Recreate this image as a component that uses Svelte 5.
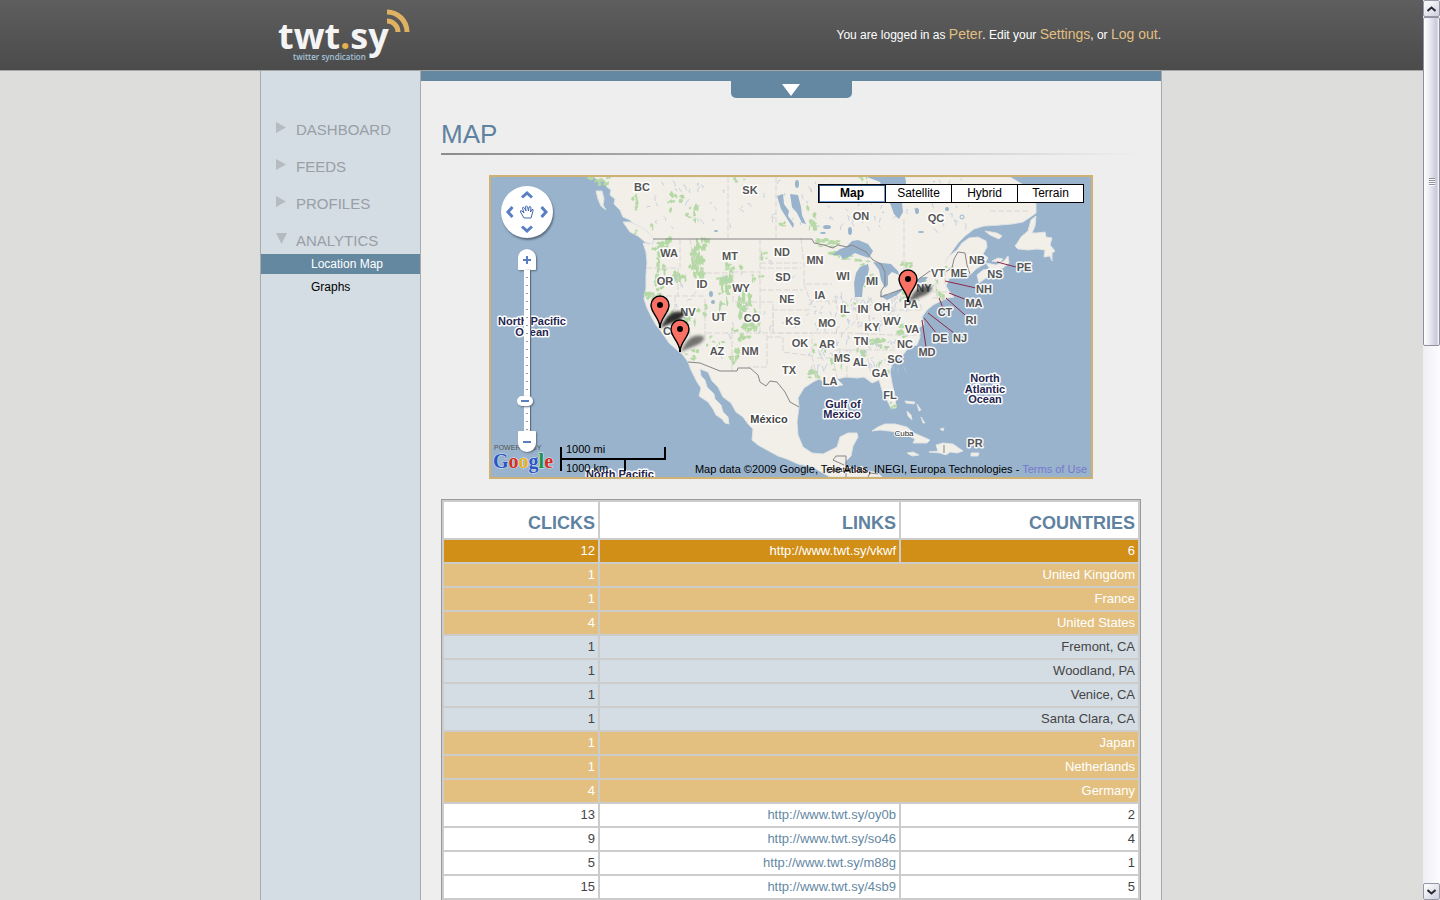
<script>
  const nav = ['Dashboard', 'Feeds', 'Profiles'];
  const mapTypes = ['Map', 'Satellite', 'Hybrid', 'Terrain'];
  let mapType = $state('Map');
  let zoom = $state(3);

  const rows = [
    { kind: 'selected', clicks: 12, link: 'http://www.twt.sy/vkwf', countries: 6 },
    { kind: 'nation', clicks: 1, place: 'United Kingdom' },
    { kind: 'nation', clicks: 1, place: 'France' },
    { kind: 'nation', clicks: 4, place: 'United States' },
    { kind: 'city', clicks: 1, place: 'Fremont, CA' },
    { kind: 'city', clicks: 1, place: 'Woodland, PA' },
    { kind: 'city', clicks: 1, place: 'Venice, CA' },
    { kind: 'city', clicks: 1, place: 'Santa Clara, CA' },
    { kind: 'nation', clicks: 1, place: 'Japan' },
    { kind: 'nation', clicks: 1, place: 'Netherlands' },
    { kind: 'nation', clicks: 4, place: 'Germany' },
    { kind: 'plain', clicks: 13, link: 'http://www.twt.sy/oy0b', countries: 2 },
    { kind: 'plain', clicks: 9, link: 'http://www.twt.sy/so46', countries: 4 },
    { kind: 'plain', clicks: 5, link: 'http://www.twt.sy/m88g', countries: 1 },
    { kind: 'plain', clicks: 15, link: 'http://www.twt.sy/4sb9', countries: 5 },
    { kind: 'plain', clicks: '', link: '', countries: '' }
  ];

  // Region labels: text, centre x, baseline y
  const labels = [
    ['BC', 642, 191], ['SK', 750, 194], ['ON', 861, 220], ['QC', 936, 222],
    ['WA', 669, 257], ['MT', 730, 260], ['ND', 782, 256], ['MN', 815, 264],
    ['OR', 665, 285], ['ID', 702, 288], ['WY', 741, 292], ['SD', 783, 281],
    ['WI', 843, 280], ['MI', 872, 285], ['NE', 787, 303], ['IA', 820, 299],
    ['NV', 688, 316], ['UT', 719, 321], ['CO', 752, 322], ['KS', 793, 325],
    ['MO', 827, 327], ['IL', 845, 313], ['IN', 863, 313], ['OH', 882, 311],
    ['KY', 872, 331], ['WV', 892, 325], ['VA', 912, 333], ['CA', 671, 335],
    ['AZ', 717, 355], ['NM', 750, 355], ['OK', 800, 347], ['AR', 827, 348],
    ['TN', 861, 345], ['NC', 905, 348], ['SC', 895, 363], ['MS', 842, 362],
    ['AL', 860, 366], ['GA', 880, 377], ['TX', 789, 374], ['LA', 830, 385],
    ['FL', 890, 399], ['PA', 911, 308], ['NY', 924, 292], ['VT', 938, 277],
    ['ME', 959, 277], ['NB', 977, 264], ['NS', 995, 278], ['PE', 1024, 271],
    ['NH', 984, 293], ['MA', 974, 307], ['RI', 971, 324], ['CT', 945, 316],
    ['NJ', 960, 342], ['DE', 940, 342], ['MD', 927, 356], ['PR', 975, 447]
  ];

  const oceans = [
    ['North Pacific', 532, 325], ['Ocean', 532, 336],
    ['North', 985, 382], ['Atlantic', 985, 393], ['Ocean', 985, 403],
    ['Gulf of', 843, 408], ['Mexico', 842, 418], ['North Pacific', 620, 478]
  ];

  const leaders = [
    [997, 262, 1016, 267], [945, 281, 976, 288], [949, 293, 967, 300],
    [946, 298, 965, 315], [939, 298, 943, 308], [928, 313, 954, 333],
    [924, 318, 937, 334], [922, 320, 926, 347]
  ];

  const lakesList = [
    [711, 294, 2, 3], [850, 231, 2, 4], [827, 227, 4, 2], [823, 233, 3, 1],
    [947, 209, 2, 2], [934, 199, 2, 3], [917, 211, 2, 3],
    [797, 184, 2, 4], [716, 231, 2, 1], [713, 302, 2, 2], [921, 232, 3, 1]
  ];

  let seed = 17;
  const rand = () => {
    seed = (seed * 16807) % 2147483647;
    return seed / 2147483647;
  };
  const blob = (cx, cy, rx, ry) => {
    const pts = [];
    for (let i = 0; i < 11; i++) {
      const a = (i / 11) * Math.PI * 2;
      const k = 0.4 + rand() * 0.8;
      pts.push(`${(cx + Math.cos(a) * rx * k).toFixed(1)},${(cy + Math.sin(a) * ry * k).toFixed(1)}`);
    }
    return pts.join(' ');
  };
  // Forest clusters: centre, spread and number of patches
  const clusters = [
    [600, 180, 9, 4, 10], [634, 202, 3, 9, 7], [638, 233, 3, 3, 2], [677, 198, 6, 5, 7],
    [692, 214, 6, 8, 7], [670, 206, 2, 5, 4], [654, 228, 3, 4, 3], [662, 244, 9, 6, 11], [661, 262, 4, 10, 9],
    [660, 283, 5, 12, 11], [649, 289, 3, 8, 4], [655, 298, 8, 6, 8], [679, 272, 7, 10, 9],
    [696, 260, 8, 15, 22], [698, 271, 6, 8, 9], [705, 245, 8, 8, 10], [724, 276, 7, 13, 18], [724, 292, 5, 5, 6],
    [737, 267, 7, 4, 4], [764, 254, 3, 6, 5], [757, 281, 6, 6, 5], [745, 313, 7, 16, 17],
    [756, 321, 5, 10, 9], [721, 310, 6, 12, 8], [700, 309, 7, 9, 4], [690, 327, 6, 10, 5],
    [671, 320, 4, 11, 6], [715, 342, 9, 6, 7], [736, 357, 6, 7, 10], [742, 334, 10, 6, 7],
    [692, 355, 6, 5, 6], [827, 243, 10, 4, 12], [843, 258, 12, 5, 9], [862, 262, 8, 3, 5],
    [868, 280, 5, 7, 5], [811, 218, 4, 10, 9], [786, 223, 6, 3, 3], [907, 265, 5, 4, 6],
    [903, 297, 7, 5, 7], [930, 283, 6, 4, 4], [940, 289, 4, 9, 5], [877, 343, 10, 5, 10],
    [898, 331, 10, 7, 7], [820, 348, 8, 6, 6], [815, 374, 6, 6, 6], [838, 370, 6, 9, 4],
    [858, 358, 8, 8, 4], [882, 367, 7, 7, 3], [894, 405, 3, 4, 4], [864, 180, 5, 3, 4],
    [742, 182, 8, 4, 3], [849, 310, 8, 8, 3], [948, 270, 5, 4, 3]
  ];
  const forests = clusters.flatMap(([x, y, sx, sy, n]) =>
    Array.from({ length: n }, () =>
      blob(x + (rand() - 0.5) * 2 * sx, y + (rand() - 0.5) * 2 * sy, 1 + rand() * sx * 0.4, 1 + rand() * sy * 0.4)
    )
  );
  // Short water strokes scattered over the north and the Mississippi basin
  const streams = [
    ...Array.from({ length: 95 }, () => [640 + rand() * 330, 178 + rand() * 50]),
    ...Array.from({ length: 130 }, () => [808 + rand() * 98, 292 + rand() * 76]),
    ...Array.from({ length: 30 }, () => [670 + rand() * 130, 245 + rand() * 110])
  ].map(([x, y]) => `M${x.toFixed(1)} ${y.toFixed(1)}l${(rand() * 6 - 3).toFixed(1)} ${(rand() * 4 - 1).toFixed(1)}l${(rand() * 4 - 2).toFixed(1)} ${(rand() * 5).toFixed(1)}`).join('');

  // Marker tip x, tip y and shadow strength
  const pins = [[660, 328, 0.95], [680, 352, 0.6], [908, 302, 0.7]];
</script>

<div class="window">
  <div class="page">
    <header>
      <div class="bar">
        <a class="logo" href="#home" aria-label="twt.sy twitter syndication">
          <svg width="136" height="60" viewBox="0 0 136 60">
            <text class="word" x="0" y="45">twt<tspan fill="#e6b04d">.</tspan>sy</text>
            <text class="tag" x="15" y="56">twitter syndication</text>
            <path d="M109 8a20 20 0 0 1 20 20M109 17a11 11 0 0 1 11 11" fill="none" stroke="#dfb263" stroke-width="5" />
          </svg>
        </a>
        <p class="account">
          You are logged in as <a href="#peter">Peter</a>. Edit your <a href="#settings">Settings</a>, or <a href="#logout">Log out</a>.
        </p>
      </div>
    </header>

    <div class="columns">
      <nav>
        {#each nav as item}
          <a class="item" href="#{item}">
            <svg width="11" height="12" viewBox="0 0 11 12"><path d="M0 0L10 5.500L0 11z" fill="#b5bbc1" /></svg>
            {item}
          </a>
        {/each}
        <a class="item" href="#analytics">
          <svg width="11" height="12" viewBox="0 0 11 12"><path d="M0 0H11L5.500 11z" fill="#b5bbc1" /></svg>
          Analytics
        </a>
        <div class="sub">
          <a class="current" href="#map">Location Map</a>
          <a href="#graphs">Graphs</a>
        </div>
      </nav>

      <main>
        <div class="strip">
          <button class="tab" aria-label="Open panel">
            <svg width="18" height="12" viewBox="0 0 18 12"><path d="M0 0H18L9 12z" fill="#fff" /></svg>
          </button>
        </div>
        <div class="content">
          <h1>Map</h1>
          <section class="map">
            <svg class="canvas" viewBox="491 177 600 300" preserveAspectRatio="xMidYMid slice">
              <defs>
                <filter id="soft" x="-30%" y="-60%" width="160%" height="220%"><feGaussianBlur stdDeviation="1.500" /></filter>
              </defs>
              <rect x="491" y="177" width="600" height="300" fill="#99b3cc" />
              <g class="land">
                <path d="M594 177L599 181L604 180L607 187L611 190L610 195L615 199L614 204L620 210L623 217L630 220L637 227L644 229L650 237L654 242L649 244L643 243L646 252L647 262L646 275L646 288L644 299L647 308L651 316L656 325L663 334L669 343L677 350L683 355L688 362L691 370L694 376L697 382L701 388L699 396L708 402L713 409L716 415L722 419L725 423L729 424L728 417L723 412L721 405L715 399L714 394L707 387L705 380L701 376L700 369L708 372L712 381L718 387L723 397L731 403L736 412L743 417L748 424L753 429L752 440L758 445L767 450L778 456L787 459L798 464L813 467L821 472L830 477H882L878 473L869 471L863 473L851 470L845 467L845 462L851 456L853 446L858 437L857 433L848 433L840 437L837 447L829 451L823 454L812 453L803 447L798 435L797 422L799 407L798 398L804 388L813 382L819 379L827 383L834 386L843 385L837 379L846 377L857 378L864 377L872 383L879 380L882 390L887 400L891 408L896 408L895 396L892 383L890 371L893 362L903 355L909 347L917 345L920 337L919 328L924 324L922 317L927 310L933 305L941 301L948 298L954 297L949 291L946 286L949 279L955 275L961 273L970 275L976 269L984 264L988 258L983 254L987 247L986 241L978 237L969 238L962 243L957 250L948 257L945 263L951 253L958 243L965 236L974 229L984 226L1000 225L1012 224L1023 222L1029 218L1036 213L1036 204L1031 196L1032 189L1020 183L1010 177z" />
                <path d="M596 191L602 191L604 199L603 205L606 210L601 206L598 199zM623 222L630 222L639 226L647 231L654 239L652 244L645 242L638 236L630 232z" />
                <path d="M1036 216L1031 220L1028 231L1021 237L1018 242L1015 246L1018 249L1028 250L1037 249L1045 250L1044 257L1050 256L1052 261L1052 253L1055 251L1050 245L1052 238L1046 237L1045 232L1037 233L1032 233L1035 226zM977 275L983 270L990 269L986 263L996 265L1004 261L1008 256L1009 263L1003 268L993 271L986 278L979 283zM985 231L997 233L1002 236L999 239L990 235zM992 261L1000 262L1003 259L998 258z" />
                <path d="M872 431L878 427L885 424L895 424L907 427L914 433L921 436L930 440L927 443L913 443L915 439L907 435L898 432L889 431L880 430zM929 452L938 451L936 445L943 443L953 444L963 451L957 453L950 452L946 455L940 453zM907 453L913 452L919 455L912 456zM971 453L979 453L978 456L971 456zM907 411L911 415L912 420L908 416zM905 401L915 402L914 404L906 403zM917 404L921 410L919 411zM921 417L925 423L923 423zM940 429L944 428L943 431z" />
              </g>
              <g fill="#b5d9a5">{#each forests as f}<polygon points={f} />{/each}</g>
              <path d={streams} fill="none" stroke="#b4c5db" stroke-width=".7" />
              <g fill="#99b3cc">
                <path d="M867 177L880 182L885 196L890 203L894 214L899 219L903 212L902 203L908 196L905 177z" />
                <path d="M832 255L840 249L846 247L852 241L858 240L868 244L873 251L869 258L860 255L855 253L848 257L843 259L840 255zM868 264L860 267L856 273L854 283L855 297L862 297L863 286L867 278L869 269zM873 262L882 263L891 264L898 271L899 275L892 272L888 276L888 285L885 288L881 280L879 270zM880 296L888 295L900 289L905 288L897 295L887 300zM913 282L922 277L928 277L924 282L914 285z" />
                <path d="M790 194L798 195L801 207L802 215L806 224L802 223L797 213L792 207zM777 196L783 194L784 204L789 211L788 216L794 224L793 228L786 217L781 209z" />
                {#each lakesList as l}<ellipse cx={l[0]} cy={l[1]} rx={l[2]} ry={l[3]} />{/each}
              </g>
              <circle cx="962" cy="217" r="2" fill="none" stroke="#99b3cc" />
              <path class="states" d="M728 177V238M776 177V238M760 239V333M760 268H801M760 263H801M760 290H803M733 272H760M733 272V302H773V333M705 299V340M706 333H812M772 310H810M773 313V333H815M801 238L804 265V284H832M804 284L810 301H835L838 310M646 268H678V296M650 296H706M680 239V268M690 239L694 262L704 273H733M675 296V315L695 342M732 333V371M767 335V367H748M767 337H783V352L812 356V335M812 356L817 378M815 333H850L890 335H920M817 358H833L837 378M847 350V378M866 350L871 374M834 350H895M857 298V320L842 333M869 297V319M892 298V312L880 322L857 327M892 298H918L922 310H892M871 374H890M935 275L937 297M945 270V286M933 292H948M932 298H945M990 211H1030M904 219V273" />
              <path class="frontier" d="M653 239H812L814 243L824 245L833 248L838 245L847 247L852 245L866 252L873 260L881 264L885 272L885 285L881 291L881 297L894 292L904 289L914 285L920 278L930 271H947L952 268L954 259L958 252L965 253L967 265L970 274M688 362L700 363L720 371H737L738 368H750L758 375L760 382L766 386L770 381L777 382L785 392L790 402L799 407M833 460L836 456H846V477M833 460L844 465M868 477L870 473L878 474M944 445V453" />
              <g stroke="#8c2848" stroke-width="1">
                {#each leaders as l}<line x1={l[0]} y1={l[1]} x2={l[2]} y2={l[3]} />{/each}
              </g>
              <g class="region">{#each labels as l}<text x={l[1]} y={l[2]}>{l[0]}</text>{/each}</g>
              <text class="country" x="769" y="423">México</text>
              <text class="small" x="904" y="436">Cuba</text>
              <text class="small" x="847" y="472">Guatemala</text>
              <g class="ocean">{#each oceans as l}<text x={l[1]} y={l[2]}>{l[0]}</text>{/each}</g>
              {#each pins as p}
                <g transform="translate({p[0]} {p[1]})">
                  <path d="M0 0L7 -11Q14 -18 23 -16Q27 -12 17 -7z" fill="#222" opacity={p[2]} filter="url(#soft)" />
                  <path d="M0 -1C-1 -11 -9 -15 -9 -23A9 9 0 0 1 9 -23C9 -15 1 -11 0 -1z" fill="#fb7064" stroke="#000" stroke-width="1.400" />
                  <path d="M0 0V-5" stroke="#000" stroke-width="2" />
                  <circle cy="-23" r="3" />
                </g>
              {/each}
              <path d="M561 447V471M561 459H665M665 447V460M625 459V471" fill="none" stroke="#000" stroke-width="2" />
              <text class="scale" x="566" y="453">1000 mi</text>
              <text class="scale" x="566" y="472">1000 km</text>
              <text class="powered" x="494" y="450">POWERED BY</text>
              <text class="google" x="493" y="468"><tspan fill="#2a56c6">G</tspan><tspan fill="#d62d20">o</tspan><tspan fill="#e8b020">o</tspan><tspan fill="#2a56c6">g</tspan><tspan fill="#159447">l</tspan><tspan fill="#d62d20">e</tspan></text>
            </svg>

            <div class="controls">
              <div class="pan">
                <svg width="52" height="52" viewBox="0 0 52 52" aria-hidden="true">
                  <g fill="none" stroke="#587fc4" stroke-width="3">
                    <path d="M21 11.500L26 7L31 11.500M21 40.500L26 45L31 40.500M11.500 21L7 26L11.500 31M40.500 21L45 26L40.500 31" />
                  </g>
                  <path d="M23 32L19.500 26Q19 24 21 25L23 27L21.500 22Q22 20 23.500 22L25 25L24.500 20.500Q25.500 19 26.500 21L27.500 25L28 21Q29.500 19.500 30 22L29.500 26L31 23.500Q32.500 22.500 32 25L30 32z" fill="#fff" stroke="#4568b0" stroke-width="1" />
                </svg>
                <button class="up" aria-label="Pan up"></button>
                <button class="left" aria-label="Pan left"></button>
                <button class="right" aria-label="Pan right"></button>
                <button class="down" aria-label="Pan down"></button>
              </div>
              <button class="zoom in" aria-label="Zoom in" onclick={() => (zoom = Math.min(18, zoom + 1))}>
                <svg width="10" height="10" viewBox="0 0 10 10"><path d="M5 1V9M1 5H9" stroke="#587fc4" stroke-width="2" /></svg>
              </button>
              <input type="range" min="0" max="18" bind:value={zoom} aria-label="Zoom level" />
              <button class="zoom out" aria-label="Zoom out" onclick={() => (zoom = Math.max(0, zoom - 1))}>
                <svg width="10" height="10" viewBox="0 0 10 10"><path d="M1 5H9" stroke="#587fc4" stroke-width="2" /></svg>
              </button>
            </div>

            <div class="types">
              {#each mapTypes as t}
                <button class:active={mapType === t} onclick={() => (mapType = t)}>{t}</button>
              {/each}
            </div>
            <p class="credit">Map data ©2009 Google, Tele Atlas, INEGI, Europa Technologies - <a href="#terms">Terms of Use</a></p>
          </section>

          <table>
            <colgroup><col class="c1" /><col class="c2" /><col /></colgroup>
            <thead><tr><th>Clicks</th><th>Links</th><th>Countries</th></tr></thead>
            <tbody>
              {#each rows as r}
                <tr class={r.kind}>
                  <td>{r.clicks}</td>
                  {#if r.place}
                    <td colspan="2">{r.place}</td>
                  {:else}
                    <td>{#if r.link}<a href={r.link}>{r.link}</a>{/if}</td>
                    <td>{r.countries}</td>
                  {/if}
                </tr>
              {/each}
            </tbody>
          </table>
        </div>
      </main>
    </div>
  </div>

  <div class="scrollbar">
    <button aria-label="Scroll up"><svg width="9" height="6" viewBox="0 0 9 6"><path d="M.5 5L4.500 1.500L8.500 5" fill="none" stroke="#2b2b35" stroke-width="2" /></svg></button>
    <div class="track"><div class="thumb"><i></i></div></div>
    <button aria-label="Scroll down"><svg width="9" height="6" viewBox="0 0 9 6"><path d="M.5 1L4.500 4.500L8.500 1" fill="none" stroke="#2b2b35" stroke-width="2" /></svg></button>
  </div>
</div>

<style>
  :global(body) { background: #dddddb; }
  .window {
    display: flex;
    height: 100vh;
    overflow: hidden;
    font-family: "Liberation Sans", Arial, sans-serif;
    font-size: 12px;
    color: #000;
  }
  a { text-decoration: none; }
  p, h1 { margin: 0; }
  button { font-family: inherit; padding: 0; border: 0; cursor: pointer; }
  .page { flex: 1; min-width: 0; display: flex; flex-direction: column; overflow: hidden; }

  header {
    flex: none;
    padding-right: 1px;
    background: linear-gradient(#5e5e5e, #4b4b4b);
    border-bottom: 1px solid #a5a5a5;
  }
  .bar {
    display: flex;
    justify-content: space-between;
    align-items: center;
    max-width: 902px;
    height: 70px;
    margin: 0 auto;
    box-sizing: border-box;
    padding: 0 1px 2px 18px;
  }
  .logo svg { display: block; overflow: visible; }
  .word { font: 700 36px "Open Sans", sans-serif; fill: #f4f4f4; }
  .tag { font: 600 8px "Open Sans", sans-serif; fill: #a3c3da; }
  .account { color: #fff; }
  .account a { color: #e0bf80; font-size: 14px; }

  .columns { flex: 1 0 auto; display: flex; justify-content: center; padding-right: 1px; }
  nav { flex: none; width: 159px; padding-top: 32px; background: #d4dce4; border: solid #aaa; border-width: 0 1px; }
  .item {
    display: flex;
    gap: 9px;
    padding: 17px 0 0 15px;
    line-height: 20px;
    font-size: 15px;
    text-transform: uppercase;
    color: #999fa5;
  }
  .item svg { margin-top: 2px; }
  .sub { display: flex; flex-direction: column; gap: 3px; padding-top: 3px; }
  .sub a { padding-left: 50px; line-height: 20px; color: #000; }
  .sub a.current { background: #6488a0; color: #fff; }

  main { flex: 1; min-width: 0; max-width: 740px; background: #eee; border-right: 1px solid #aaa; }
  .strip { height: 10px; background: #6488a2; display: flex; justify-content: center; align-items: flex-start; }
  .tab { width: 121px; height: 27px; padding-top: 8px; background: #6488a2; border-radius: 0 0 5px 5px; }
  .tab svg { display: block; margin: 2px auto 0; }
  .content { padding: 37px 20px 0; }
  h1 {
    padding-bottom: 5px;
    line-height: 32px;
    font-size: 26px;
    font-weight: 400;
    text-transform: uppercase;
    color: #5f82a0;
    background: linear-gradient(90deg, #8c8c8c, #bbb 50%, #eee) bottom / 100% 2px no-repeat;
  }

  .map {
    position: relative;
    max-width: 600px;
    height: 300px;
    margin: 20px auto;
    border: 2px solid #cfb272;
    overflow: hidden;
  }
  .canvas { display: block; width: 100%; height: 100%; }
  .land { fill: #f2efe9; stroke: #dfe3e3; stroke-width: 1; }
  .states { fill: none; stroke: #dad7d4; stroke-width: 1; stroke-dasharray: 6 2; }
  .frontier { fill: none; stroke: #858585; stroke-width: 1; }
  .canvas text { paint-order: stroke; }
  .region text, .ocean text, .country, .small { text-anchor: middle; stroke: #fff; stroke-width: 3px; stroke-linejoin: round; font-weight: 700; font-size: 11px; }
  .region text { fill: #555; stroke-opacity: .9; }
  .ocean text { fill: #25254f; }
  .country { fill: #444; }
  .canvas .small { font-size: 8px; font-weight: 400; fill: #222; stroke-width: 2px; }
  .scale { font-size: 11px; }
  .powered { font-size: 7px; fill: #555; }
  .google { font: 700 20px "Liberation Serif", serif; stroke: #dfe8f0; stroke-width: 1px; }

  .controls { position: absolute; left: 10px; top: 9px; width: 52px; display: flex; flex-direction: column; align-items: center; }
  .pan { position: relative; width: 52px; height: 52px; margin-bottom: 11px; border-radius: 50%; background: #fff; box-shadow: 1px 2px 2px #5c6d80; }
  .pan svg { display: block; }
  .pan button { position: absolute; width: 16px; height: 16px; background: none; }
  .pan .up { left: 18px; top: 1px; }
  .pan .down { left: 18px; bottom: 1px; }
  .pan .left { left: 1px; top: 18px; }
  .pan .right { right: 1px; top: 18px; }
  .zoom { display: flex; align-items: center; justify-content: center; width: 18px; height: 21px; background: #fff; box-shadow: 1px 1px 2px #5c6d80; }
  .in { border-radius: 9px 9px 1px 1px; }
  .out { border-radius: 1px 1px 9px 9px; }
  input[type="range"] {
    appearance: none;
    writing-mode: vertical-lr;
    direction: rtl;
    width: 6px;
    height: 161px;
    margin: 0;
    background: repeating-linear-gradient(#fff 0 7px, #9a9a9a 7px 8px) center / 2px 100% no-repeat, #fff;
    box-shadow: 1px 0 1px #5c6d80;
  }
  input[type="range"]::-webkit-slider-thumb {
    appearance: none;
    width: 16px;
    height: 10px;
    margin-left: -5px;
    border-radius: 5px;
    background: linear-gradient(#587fc4, #587fc4) center / 8px 2px no-repeat, #fff;
    box-shadow: 1px 1px 2px #5c6d80;
  }
  .types { position: absolute; top: 7px; right: 7px; display: flex; border: 1px solid #000; }
  .types button { width: 66px; height: 17px; background: #fff; border-left: 1px solid #000; font-size: 12px; line-height: 17px; color: #000; }
  .types button:first-child { border-left: 0; }
  .types .active { font-weight: 700; box-shadow: inset 1px 1px #345684, inset -1px -1px #6c9ddf; }
  .credit { position: absolute; right: 4px; bottom: 1px; font-size: 11px; line-height: 14px; white-space: nowrap; }
  .credit a { color: #7777cc; }

  table { width: 100%; table-layout: fixed; border: 1px solid #999; border-spacing: 2px; background: #ccc; font-size: 13px; color: #444; }
  .c1 { width: 154px; }
  .c2 { width: 299px; }
  th, td { padding: 0 3px; text-align: right; background: #fff; }
  th { height: 36px; padding-top: 6px; box-sizing: border-box; font-size: 18px; line-height: 29px; text-transform: uppercase; color: #5f82a0; }
  td { height: 22px; line-height: 22px; }
  td a { color: #6488a2; }
  .selected td { background: #d18f17; color: #fff; }
  .selected a { color: #fff; }
  .nation td { background: #e3c080; color: #fff; }
  .city td { background: #d4dce4; }

  .scrollbar { flex: none; width: 17px; display: flex; flex-direction: column; background: linear-gradient(90deg, #eeeef4, #fdfdff); }
  .scrollbar button { display: flex; align-items: center; justify-content: center; height: 17px; box-sizing: border-box; border: 1px solid #9697a5; border-radius: 2px; background: linear-gradient(135deg, #fff, #cfcfdf); }
  .track { flex: 1; }
  .thumb { display: flex; align-items: center; justify-content: center; height: 38%; box-sizing: border-box; border: 1px solid #8f909f; border-radius: 2px; background: linear-gradient(90deg, #fff, #e8e8f0 40%, #c8c8d9 85%, #fff); }
  .thumb i { width: 6px; height: 8px; background: repeating-linear-gradient(#8e8e9c 0 1px, #fff 1px 2px); }
</style>
